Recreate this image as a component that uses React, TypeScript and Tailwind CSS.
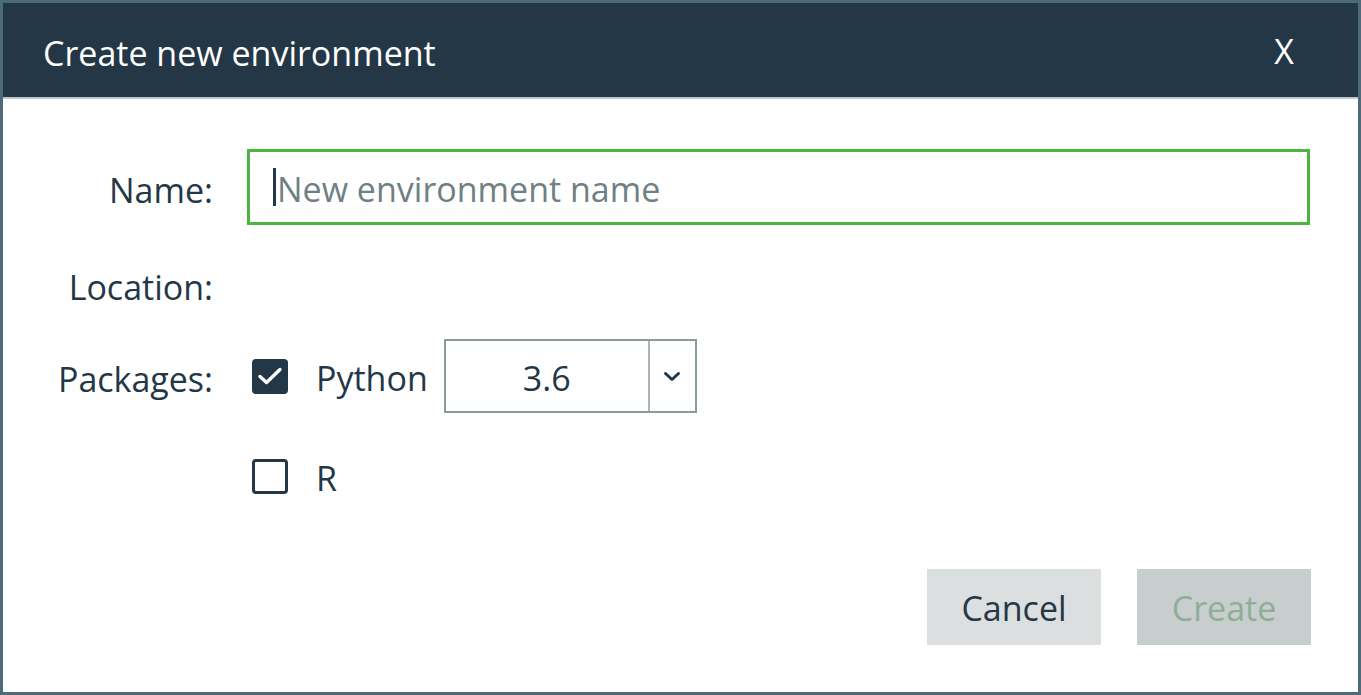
import { useState } from "react";

const FONT = { fontFamily: '"Open Sans", "Noto Sans", sans-serif' };

function Checkbox({ checked, onChange }: { checked: boolean; onChange: () => void }) {
  return (
    <button
      onClick={onChange}
      className={`flex h-[35px] w-[36px] items-center justify-center rounded-[4px] ${
        checked ? "bg-[#243746]" : "border-[3px] border-[#243746] bg-white"
      }`}
    >
      {checked && (
        <svg width="26" height="20" viewBox="0 0 26 20" fill="none">
          <path d="M3 10.5 L9.5 16.5 L23 3.5" stroke="white" strokeWidth="3.4" strokeLinecap="round" strokeLinejoin="round" />
        </svg>
      )}
    </button>
  );
}

export default function App() {
  const [name, setName] = useState("");
  const [python, setPython] = useState(true);
  const [r, setR] = useState(false);

  return (
    <div
      style={FONT}
      className="flex h-[695px] w-[1361px] flex-col border-[3px] border-[#4d6a7b] bg-white text-[#243746]"
    >
      <div className="flex h-[96px] shrink-0 items-center justify-between border-b-2 border-[#c3c9cb] bg-[#243746] pl-[40px] pr-[64px] text-white">
        <div className="pt-[6px] text-[34px]">Create new environment</div>
        <div className="pt-[2px] text-[34px]">X</div>
      </div>

      <div className="grid grid-cols-[210px_1fr] gap-x-[34px] pr-[48px] text-[34px]">
        <div className="mt-[50px] flex h-[76px] items-center justify-end pt-[6px]">Name:</div>
        <div className="mt-[50px] flex h-[76px] items-center border-[3px] border-[#4cb43f] pl-[23px]">
          <span className="mr-[1px] h-[38px] w-[3px] bg-[#243746]" />
          <input
            value={name}
            onChange={(e) => setName(e.target.value)}
            placeholder="New environment name"
            className="flex-1 bg-transparent pt-[4px] text-[34px] text-[#243746] outline-none placeholder:text-[#6f8083]"
          />
        </div>

        <div className="mt-[38px] flex h-[48px] items-center justify-end">Location:</div>
        <div className="mt-[38px] h-[48px]" />

        <div className="mt-[28px] flex h-[74px] items-center justify-end pt-[6px]">Packages:</div>
        <div className="mt-[28px] flex h-[74px] items-center">
          <div className="ml-[5px]">
            <Checkbox checked={python} onChange={() => setPython(!python)} />
          </div>
          <span className="ml-[28px] pt-[4px]">Python</span>
          <div className="ml-[16px] flex h-[74px] w-[253px] border-2 border-[#8e9b9c]">
            <div className="flex flex-1 items-center justify-center border-r-2 border-[#a9b4b5] pt-[4px]">3.6</div>
            <div className="flex w-[45px] items-center justify-center">
              <svg width="18" height="11" viewBox="0 0 18 11" fill="none">
                <path d="M2.5 2.5 L9 8.5 L15.5 2.5" stroke="#243746" strokeWidth="3" strokeLinecap="round" strokeLinejoin="round" />
              </svg>
            </div>
          </div>
        </div>

        <div className="mt-[39px] h-[48px]" />
        <div className="mt-[39px] flex h-[48px] items-center">
          <div className="ml-[5px]">
            <Checkbox checked={r} onChange={() => setR(!r)} />
          </div>
          <span className="ml-[28px] pt-[4px]">R</span>
        </div>
      </div>

      <div className="mt-[69px] flex justify-end gap-[36px] pr-[47px] text-[34px]">
        <button className="h-[76px] w-[174px] bg-[#dcdfe0] pt-[2px] text-[#243746]">Cancel</button>
        <button disabled className="h-[76px] w-[174px] bg-[#c8cdce] pt-[2px] text-[#8fae95]">
          Create
        </button>
      </div>
    </div>
  );
}
